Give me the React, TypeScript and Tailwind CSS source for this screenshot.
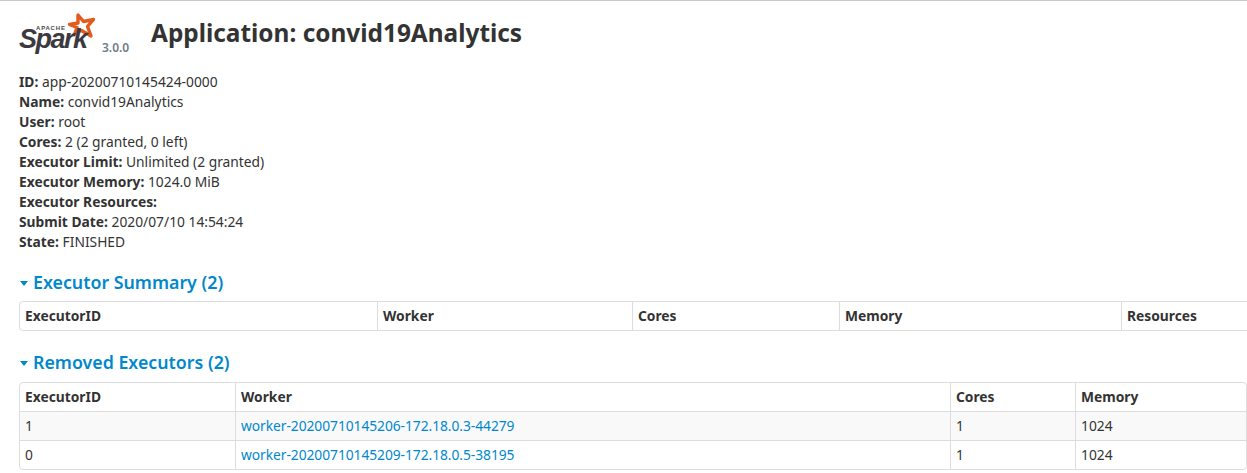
const FONT = "font-['Noto_Sans','Open_Sans',sans-serif]";

/* spark logo: star is a drawing, the words stay real text */
function SparkLogo() {
  return (
    <div className="relative h-[60px] w-[102px] shrink-0">
      <svg className="absolute left-[66px] top-[11px]" width="32" height="28" viewBox="0 0 32 28" fill="none">
        <path
          d="M12 3 L17.5 9.5 L27.5 7.5 L21.5 14.5 L25 24 L15.5 18.5 L9 21 L11 15.5 L3.5 12.5 L12 11 Z"
          stroke="#e25a1c"
          strokeWidth="3.4"
          strokeLinejoin="round"
          fill="none"
        />
      </svg>
      <span className="absolute left-[36px] top-[25px] text-[6px] leading-[5px] font-bold tracking-[0.8px] text-[#4a484c] font-['Liberation_Sans',sans-serif]">
        APACHE
      </span>
      <span className="absolute left-[19px] top-[30px] text-[27px] leading-[16px] font-bold italic tracking-[-1.5px] text-[#3c3a3e] font-['Liberation_Sans',sans-serif]">
        Spark
      </span>
    </div>
  );
}

function Info({ k, v }: { k: string; v: string }) {
  return (
    <li className="h-5">
      <strong className="font-bold">{k}</strong> {v}
    </li>
  );
}

function Section({ title }: { title: string }) {
  return (
    <h4 className="flex h-[30px] items-center text-[17.8px] font-semibold leading-[30px] text-[#0088cc]">
      <span className="mr-[5px] ml-[1px] mt-[3px] h-0 w-0 border-x-[4.5px] border-t-[5px] border-x-transparent border-t-[#0088cc]" />
      {title}
    </h4>
  );
}

const TH = "h-[28px] border-l border-[#ddd] px-[5px] text-left align-middle font-bold first:border-l-0";
const TD = "h-[29px] border-l border-t border-[#ddd] px-[5px] align-middle first:border-l-0";

export default function App() {
  return (
    <div className={`h-[473px] w-[1247px] overflow-hidden border-t border-[#c8c8c8] bg-white text-[13.8px] leading-5 text-[#333] ${FONT}`}>
      <div className="flex h-[70px] items-start">
        <SparkLogo />
        <span className="mt-[40px] w-[49px] text-[12px] font-semibold leading-[14px] text-[#6f7d8c]">3.0.0</span>
        <h3 className="mt-[14px] text-[24.4px] font-bold leading-[36px]">Application: convid19Analytics</h3>
      </div>

      <ul className="ml-[19px] mt-[1px]">
        <Info k="ID:" v="app-20200710145424-0000" />
        <Info k="Name:" v="convid19Analytics" />
        <Info k="User:" v="root" />
        <Info k="Cores:" v="2 (2 granted, 0 left)" />
        <Info k="Executor Limit:" v="Unlimited (2 granted)" />
        <Info k="Executor Memory:" v="1024.0 MiB" />
        <Info k="Executor Resources:" v="" />
        <Info k="Submit Date:" v="2020/07/10 14:54:24" />
        <Info k="State:" v="FINISHED" />
      </ul>

      <div className="ml-[19px] mt-[15px]">
        <Section title="Executor Summary (2)" />
      </div>
      <div className="ml-[19px] mt-[4px] w-[1232px] overflow-hidden rounded border border-[#ddd]">
        <table className="w-full table-fixed border-separate border-spacing-0">
          <thead>
            <tr>
              <th className={`${TH} w-[357px]`}>ExecutorID</th>
              <th className={`${TH} w-[255px]`}>Worker</th>
              <th className={`${TH} w-[207px]`}>Cores</th>
              <th className={`${TH} w-[282px]`}>Memory</th>
              <th className={TH}>Resources</th>
            </tr>
          </thead>
        </table>
      </div>

      <div className="ml-[19px] mt-[16px]">
        <Section title="Removed Executors (2)" />
      </div>
      <div className="ml-[19px] mt-[5px] w-[1228px] overflow-hidden rounded border border-[#ddd]">
        <table className="w-full table-fixed border-separate border-spacing-0">
          <thead>
            <tr>
              <th className={`${TH} w-[215px]`}>ExecutorID</th>
              <th className={`${TH} w-[715px]`}>Worker</th>
              <th className={`${TH} w-[125px]`}>Cores</th>
              <th className={TH}>Memory</th>
            </tr>
          </thead>
          <tbody>
            <tr className="bg-[#f9f9f9]">
              <td className={TD}>1</td>
              <td className={TD}><a className="tracking-[-0.05px] text-[#0088cc]">worker-20200710145206-172.18.0.3-44279</a></td>
              <td className={TD}>1</td>
              <td className={TD}>1024</td>
            </tr>
            <tr>
              <td className={TD}>0</td>
              <td className={TD}><a className="tracking-[-0.05px] text-[#0088cc]">worker-20200710145209-172.18.0.5-38195</a></td>
              <td className={TD}>1</td>
              <td className={TD}>1024</td>
            </tr>
          </tbody>
        </table>
      </div>
    </div>
  );
}
